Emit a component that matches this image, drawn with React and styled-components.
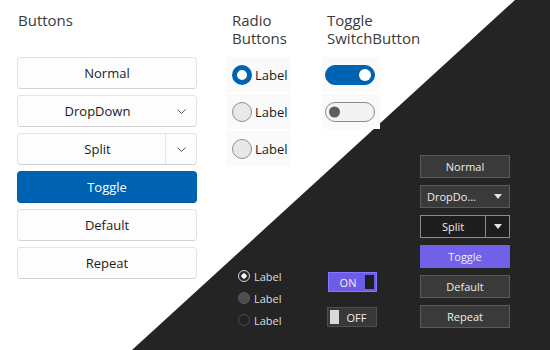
import React from 'react';
import styled, { createGlobalStyle } from 'styled-components';

const Global = createGlobalStyle`
  html, body { margin: 0; padding: 0; background: #fff; }
  body { font-family: "Open Sans", "Noto Sans", sans-serif; }
  * { box-sizing: border-box; }
`;

const Page = styled.div`
  position: relative;
  width: 550px;
  height: 350px;
  overflow: hidden;
  display: flex;
  padding-left: 17px;
  background: #ffffff;
  &::before {
    content: '';
    position: absolute;
    inset: 0;
    background: #242424;
    clip-path: polygon(515px 0, 550px 0, 550px 350px, 132px 350px);
  }
`;

const Column = styled.div`
  position: relative;
  z-index: ${(p) => (p.$under ? 0 : 1)};
  display: flex;
  flex-direction: column;
  width: ${(p) => p.$w}px;
  margin-left: ${(p) => p.$ml || 0}px;
  padding-top: ${(p) => p.$pt || 0}px;
`;

const Header = styled.div`
  padding-top: 11px;
  padding-left: ${(p) => p.$pl || 0}px;
  font-size: 15px;
  line-height: 18px;
  color: #3a3a3a;
`;

const Stack = styled.div`
  display: flex;
  flex-direction: column;
  gap: ${(p) => p.$gap}px;
  margin-top: ${(p) => p.$mt || 0}px;
`;

const LightButton = styled.div`
  height: 32px;
  display: flex;
  align-items: center;
  justify-content: center;
  border: 1px solid ${(p) => (p.$accent ? '#0063b1' : '#e3e3e3')};
  border-bottom-color: ${(p) => (p.$accent ? '#00529a' : '#d2d2d2')};
  border-radius: 4px;
  background: ${(p) => (p.$accent ? '#0063b1' : '#fdfdfd')};
  color: ${(p) => (p.$accent ? '#ffffff' : '#1b1b1b')};
  font-size: 13px;
  overflow: hidden;
`;

const SplitMain = styled.div`
  flex: 1;
  height: 100%;
  display: flex;
  align-items: center;
  justify-content: center;
  padding-left: 12px;
`;

const SplitSide = styled.div`
  width: 31px;
  height: 100%;
  display: flex;
  align-items: center;
  justify-content: center;
  border-left: 1px solid ${(p) => (p.$line ? '#e5e5e5' : 'transparent')};
`;

const Chevron = () => (
  <svg width="9" height="5" viewBox="0 0 9 5">
    <path d="M0.5 0.5 L4.5 4.5 L8.5 0.5" fill="none" stroke="#555" strokeWidth="1" />
  </svg>
);

const LightItem = styled.div`
  height: 35px;
  width: ${(p) => p.$w}px;
  margin-bottom: 2px;
  display: flex;
  align-items: center;
  gap: 3px;
  padding-left: ${(p) => p.$pl}px;
  background: #fafafa;
`;

const LightRadio = styled.span`
  width: 20px;
  height: 20px;
  border-radius: 50%;
  border: ${(p) => (p.$on ? '5px solid #0063b1' : '1px solid #8f8f8f')};
  background: ${(p) => (p.$on ? '#ffffff' : '#e8e8e8')};
`;

const LightLabel = styled.span`
  font-size: 13px;
  color: #1a1a1a;
`;

const Switch = styled.span`
  position: relative;
  width: 50px;
  height: 20px;
  border-radius: 10px;
  background: ${(p) => (p.$on ? '#0063b1' : '#f3f3f3')};
  border: 1px solid ${(p) => (p.$on ? '#0063b1' : '#8a8a8a')};
  &::after {
    content: '';
    position: absolute;
    top: 50%;
    transform: translateY(-50%);
    width: ${(p) => (p.$on ? 12 : 11)}px;
    height: ${(p) => (p.$on ? 12 : 11)}px;
    border-radius: 50%;
    background: ${(p) => (p.$on ? '#ffffff' : '#5d5d5d')};
    ${(p) => (p.$on ? 'right: 3px;' : 'left: 3px;')}
  }
`;

const DarkRadioItem = styled.div`
  height: 22px;
  display: flex;
  align-items: center;
  gap: 4px;
  padding-left: 11px;
`;

const DarkRadio = styled.span`
  width: 12px;
  height: 12px;
  border-radius: 50%;
  border: ${(p) =>
    p.$kind === 'on' ? '1.5px solid #d4d4d4' : p.$kind === 'hover' ? '1px solid #5a5a5a' : '1px solid #4a4a4a'};
  background: ${(p) =>
    p.$kind === 'on'
      ? 'radial-gradient(circle, #f2f2f2 0 2.4px, #2a2a2a 2.9px)'
      : p.$kind === 'hover'
      ? '#4e4e4e'
      : 'transparent'};
`;

const DarkLabel = styled.span`
  font-size: 11px;
  color: #dedede;
`;

const DarkSwitch = styled.div`
  width: ${(p) => (p.$on ? 49 : 50)}px;
  height: 20px;
  margin-left: ${(p) => (p.$on ? 6 : 5)}px;
  margin-top: ${(p) => p.$mt || 0}px;
  display: flex;
  flex-direction: ${(p) => (p.$on ? 'row' : 'row-reverse')};
  padding: 2px;
  border: 1px solid ${(p) => (p.$on ? '#8677ff' : '#4e4e4e')};
  background: ${(p) => (p.$on ? '#6c5ce7' : '#383838')};
`;

const DarkSwitchText = styled.span`
  flex: 1;
  display: flex;
  align-items: center;
  justify-content: center;
  font-size: 11px;
  color: #f0f0f0;
`;

const DarkKnob = styled.span`
  width: 9px;
  height: 100%;
  background: ${(p) => (p.$on ? '#1e1e1e' : '#d9d9d9')};
`;

const DarkButton = styled.div`
  height: 23px;
  display: flex;
  align-items: center;
  justify-content: center;
  border: 1px solid ${(p) => (p.$variant === 'accent' ? '#7160e8' : p.$variant === 'split' ? '#8c8c8c' : '#5a5a5a')};
  background: ${(p) => (p.$variant === 'accent' ? '#7160e8' : p.$variant === 'split' ? '#1d1d1d' : '#3a3a3a')};
  color: #ececec;
  font-size: 11px;
  overflow: hidden;
`;

const DarkMain = styled.div`
  flex: 1;
  min-width: 0;
  height: 100%;
  display: flex;
  align-items: center;
  justify-content: ${(p) => (p.$left ? 'flex-start' : 'center')};
  padding: ${(p) => (p.$left ? '0 5px 0 6px' : '0')};
`;

const Ellipsis = styled.span`
  white-space: nowrap;
  overflow: hidden;
  text-overflow: ellipsis;
`;

const DarkSide = styled.div`
  width: 24px;
  height: 100%;
  display: flex;
  align-items: center;
  justify-content: center;
  border-left: 1px solid ${(p) => (p.$line ? '#8c8c8c' : 'transparent')};
`;

const Triangle = styled.span`
  width: 0;
  height: 0;
  border-left: 4px solid transparent;
  border-right: 4px solid transparent;
  border-top: 5px solid #e4e4e4;
`;

export default function App() {
  return (
    <>
      <Global />
      <Page>
        <Column $w={180}>
          <Header $pl={1}>Buttons</Header>
          <Stack $gap={6} $mt={28}>
            <LightButton>Normal</LightButton>
            <LightButton>
              <SplitMain>DropDown</SplitMain>
              <SplitSide>
                <Chevron />
              </SplitSide>
            </LightButton>
            <LightButton>
              <SplitMain>Split</SplitMain>
              <SplitSide $line>
                <Chevron />
              </SplitSide>
            </LightButton>
            <LightButton $accent>Toggle</LightButton>
            <LightButton>Default</LightButton>
            <LightButton>Repeat</LightButton>
          </Stack>
        </Column>

        <Column $w={95} $ml={30}>
          <Header $pl={5}>
            Radio
            <br />
            Buttons
          </Header>
          <Stack $gap={0} $mt={10}>
            <LightItem $w={64} $pl={5}>
              <LightRadio $on />
              <LightLabel>Label</LightLabel>
            </LightItem>
            <LightItem $w={64} $pl={5}>
              <LightRadio />
              <LightLabel>Label</LightLabel>
            </LightItem>
            <LightItem $w={64} $pl={5}>
              <LightRadio />
              <LightLabel>Label</LightLabel>
            </LightItem>
          </Stack>
          <Stack $gap={0} $mt={97}>
            <DarkRadioItem>
              <DarkRadio $kind="on" />
              <DarkLabel>Label</DarkLabel>
            </DarkRadioItem>
            <DarkRadioItem>
              <DarkRadio $kind="hover" />
              <DarkLabel>Label</DarkLabel>
            </DarkRadioItem>
            <DarkRadioItem>
              <DarkRadio $kind="off" />
              <DarkLabel>Label</DarkLabel>
            </DarkRadioItem>
          </Stack>
        </Column>

        <Column $w={98}>
          <Header $pl={5}>
            Toggle
            <br />
            SwitchButton
          </Header>
          <Stack $gap={0} $mt={10}>
            <LightItem $w={58} $pl={3}>
              <Switch $on />
            </LightItem>
            <LightItem $w={58} $pl={3}>
              <Switch />
            </LightItem>
          </Stack>
          <DarkSwitch $on $mt={141}>
            <DarkSwitchText>ON</DarkSwitchText>
            <DarkKnob $on />
          </DarkSwitch>
          <DarkSwitch $mt={15}>
            <DarkSwitchText>OFF</DarkSwitchText>
            <DarkKnob />
          </DarkSwitch>
        </Column>

        <Column $w={90} $pt={155}>
          <Stack $gap={7}>
            <DarkButton>Normal</DarkButton>
            <DarkButton>
              <DarkMain $left>
                <Ellipsis>DropDown</Ellipsis>
              </DarkMain>
              <DarkSide>
                <Triangle />
              </DarkSide>
            </DarkButton>
            <DarkButton $variant="split">
              <DarkMain>Split</DarkMain>
              <DarkSide $line>
                <Triangle />
              </DarkSide>
            </DarkButton>
            <DarkButton $variant="accent">Toggle</DarkButton>
            <DarkButton>Default</DarkButton>
            <DarkButton>Repeat</DarkButton>
          </Stack>
        </Column>
      </Page>
    </>
  );
}
